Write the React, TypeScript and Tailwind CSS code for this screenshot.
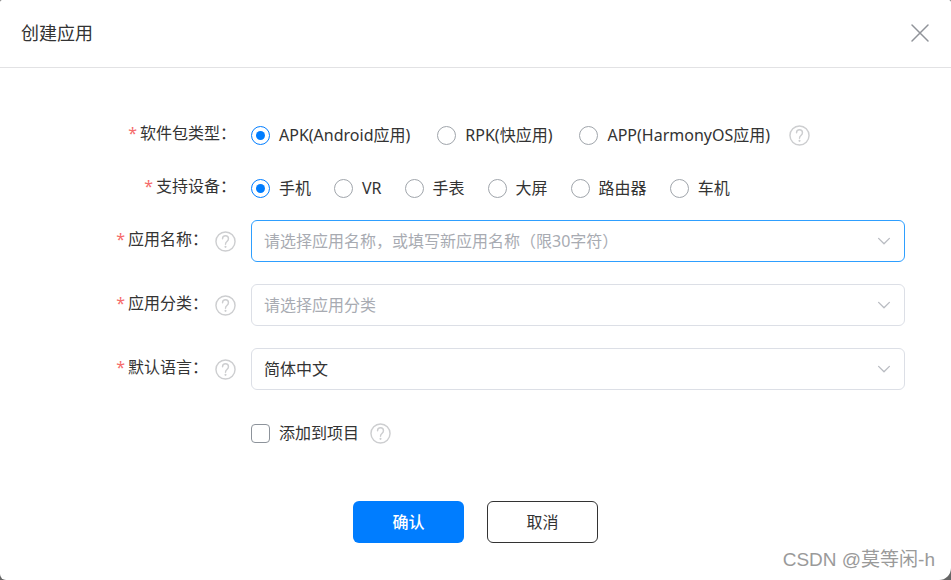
import { useState, type ReactNode } from "react";

const packageTypes = ["APK(Android应用)", "RPK(快应用)", "APP(HarmonyOS应用)"];
const devices = ["手机", "VR", "手表", "大屏", "路由器", "车机"];

function HelpButton({ topic }: { topic: string }) {
  return (
    <button type="button" aria-label={topic} className="shrink-0 text-[#cdced0]">
      <svg width="21" height="21" viewBox="0 0 22 22" fill="none" stroke="currentColor" strokeWidth="1.5" strokeLinecap="round">
        <circle cx="11" cy="11" r="10" />
        <path d="M7.9 8.2C7.9 6.3 9.2 5 11 5s3.1 1.3 3.1 3.1c0 1.4-.7 2.1-1.6 2.9-.9.8-1.5 1.4-1.5 2.8" />
        <circle cx="11" cy="16.6" r="1.1" fill="currentColor" stroke="none" />
      </svg>
    </button>
  );
}

function Chevron() {
  return (
    <svg className="pointer-events-none absolute right-3.5 top-1/2 -translate-y-1/2 text-[#b9bcc2]" width="14" height="14" viewBox="0 0 14 14" fill="none" stroke="currentColor" strokeWidth="1.3" strokeLinecap="round" strokeLinejoin="round">
      <path d="M1.6 4.4 7 9.8l5.4-5.4" />
    </svg>
  );
}

type RowProps = { label?: string; htmlFor?: string; labelId?: string; help?: boolean; children: ReactNode };

function Row({ label, htmlFor, labelId, help, children }: RowProps) {
  return (
    <div className="flex min-h-[42px] items-center gap-[15px]">
      <div className="flex w-[236px] shrink-0 items-center justify-end gap-[7px]">
        {label && (
          <label id={labelId} htmlFor={htmlFor} className="pb-1">
            <span className="mr-[3px] text-[#f56c6c]">*</span>
            {label}：
          </label>
        )}
        {help && <HelpButton topic={label + "说明"} />}
      </div>
      <div className="flex min-w-0 flex-1 items-center">{children}</div>
    </div>
  );
}

type RadiosProps = { name: string; labelId: string; options: string[]; spacing: string };

function Radios({ name, labelId, options, spacing }: RadiosProps) {
  const [value, setValue] = useState(options[0]);
  return (
    <div role="radiogroup" aria-labelledby={labelId} className={"flex flex-wrap " + spacing}>
      {options.map((option) => (
        <label key={option} className="flex items-center gap-[9px] whitespace-nowrap">
          <input
            type="radio"
            name={name}
            checked={value === option}
            onChange={() => setValue(option)}
            className="size-[19px] shrink-0 appearance-none rounded-full border border-[#a0a5ab] bg-white checked:border-[#007dff] checked:bg-[#007dff] checked:bg-clip-content checked:p-1"
          />
          {option}
        </label>
      ))}
    </div>
  );
}

const fieldClass = "h-[42px] w-full appearance-none rounded-md border bg-white pl-3 pr-10 outline-none";

export default function App() {
  const [category, setCategory] = useState("");
  return (
    <div className="min-h-screen bg-[#666666] font-['Noto_Sans','Noto_Sans_CJK_SC',sans-serif] text-base leading-6 text-[#333333]">
      <main className="relative min-h-screen rounded-t-xs rounded-bl-md rounded-br-xl bg-white">
        <header className="flex h-[68px] items-center justify-between border-b border-[#e2e2e4] px-[21px] pb-0.5">
          <h1 className="text-lg">创建应用</h1>
          <button type="button" aria-label="关闭" className="text-[#909399]">
            <svg width="20" height="20" viewBox="0 0 20 20" fill="none" stroke="currentColor" strokeWidth="1.5" strokeLinecap="round">
              <path d="M2 2l16 16M18 2 2 18" />
            </svg>
          </button>
        </header>

        <form className="pt-[46px]" onSubmit={(event) => event.preventDefault()}>
          <div className="flex flex-col gap-[11px] pr-[46px]">
            <Row label="软件包类型" labelId="package-label">
              <Radios name="package" labelId="package-label" options={packageTypes} spacing="gap-x-[27px]" />
              <div className="ml-[19px] flex">
                <HelpButton topic="软件包类型说明" />
              </div>
            </Row>
            <Row label="支持设备" labelId="device-label">
              <Radios name="device" labelId="device-label" options={devices} spacing="gap-x-[23px]" />
            </Row>
          </div>

          <div className="mt-[11px] flex flex-col gap-[22px] pr-[46px]">
            <Row label="应用名称" htmlFor="app-name" help>
              <div className="relative w-full">
                <input
                  id="app-name"
                  type="text"
                  placeholder="请选择应用名称，或填写新应用名称（限30字符）"
                  className={fieldClass + " border-[#2e9fff] placeholder:text-[#a8abb2]"}
                />
                <Chevron />
              </div>
            </Row>
            <Row label="应用分类" htmlFor="app-category" help>
              <div className="relative w-full">
                <select
                  id="app-category"
                  value={category}
                  onChange={(event) => setCategory(event.target.value)}
                  className={fieldClass + " border-[#dcdfe6] " + (category ? "" : "text-[#a8abb2]")}
                >
                  <option value="">请选择应用分类</option>
                </select>
                <Chevron />
              </div>
            </Row>
            <Row label="默认语言" htmlFor="app-language" help>
              <div className="relative w-full">
                <select id="app-language" className={fieldClass + " border-[#dcdfe6]"}>
                  <option>简体中文</option>
                </select>
                <Chevron />
              </div>
            </Row>
            <Row>
              <label className="flex items-center gap-[9px]">
                <input type="checkbox" className="size-[19px] appearance-none rounded-sm border border-[#8d939b] bg-white checked:bg-[#007dff]" />
                添加到项目
              </label>
              <div className="ml-[11px] flex">
                <HelpButton topic="添加到项目说明" />
              </div>
            </Row>
          </div>

          <div className="mt-[47px] flex justify-center gap-[23px]">
            <button type="submit" className="h-[42px] w-[111px] rounded-md bg-[#007dff] font-medium text-white">
              确认
            </button>
            <button type="button" className="h-[42px] w-[111px] rounded-md border border-[#333333] bg-white">
              取消
            </button>
          </div>
        </form>

        <p className="absolute bottom-2 right-4 font-['Liberation_Sans','Noto_Sans_CJK_SC',sans-serif] text-[19px] text-[#9a9a9a]">
          CSDN @莫等闲-h
        </p>
      </main>
    </div>
  );
}
